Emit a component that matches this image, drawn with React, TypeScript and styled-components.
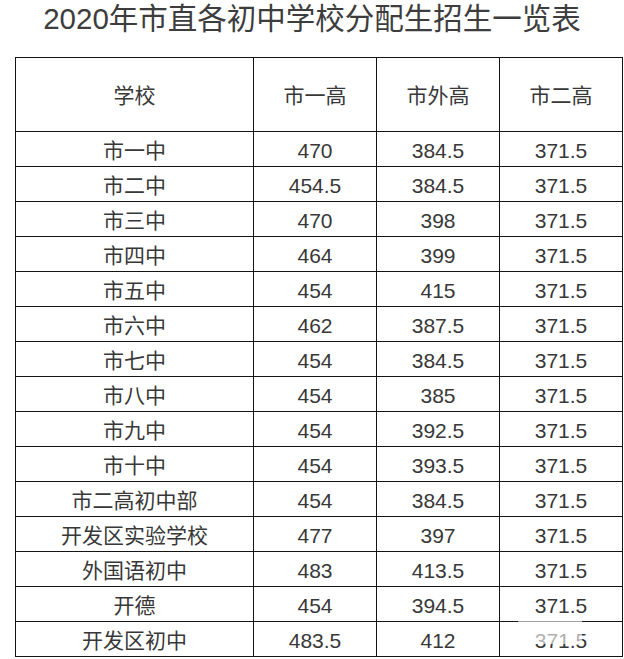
import React from "react";
import styled, { createGlobalStyle } from "styled-components";

const GlobalStyle = createGlobalStyle`
  html, body {
    margin: 0;
    padding: 0;
    background: #ffffff;
  }
  body {
    font-family: "Liberation Sans", "Noto Sans CJK SC", sans-serif;
    color: #333333;
  }
`;

const Page = styled.div`
  position: relative;
  width: 624px;
  height: 659px;
  overflow: hidden;
  background: #ffffff;
`;

const Title = styled.h1`
  margin: 0;
  height: 57px;
  padding-top: 2px;
  box-sizing: border-box;
  text-align: center;
  font-size: 29.5px;
  font-weight: 400;
  line-height: 34px;
  color: #3d3d3d;
`;

const Grid = styled.div`
  margin-left: 15px;
  width: 608px;
  box-sizing: border-box;
  display: grid;
  grid-template-columns: 237px 122px 122px 122px;
  grid-template-rows: 73px;
  grid-auto-rows: 34px;
  gap: 1px;
  padding: 1px;
  background: #141414;
`;

const Cell = styled.div<{ $head?: boolean }>`
  background: #ffffff;
  display: flex;
  align-items: center;
  justify-content: center;
  font-size: 21px;
  line-height: 1;
  color: #383838;
  padding-top: ${(p) => (p.$head ? "2px" : "3px")};
  box-sizing: border-box;
  white-space: nowrap;
`;

/* faint watermark patch over the bottom-right corner */
const Watermark = styled.div`
  position: absolute;
  left: 518px;
  top: 618px;
  width: 64px;
  height: 26px;
  background: rgba(255, 255, 255, 0.6);
  pointer-events: none;
`;

const headers = ["学校", "市一高", "市外高", "市二高"];

const rows: [string, string, string, string][] = [
  ["市一中", "470", "384.5", "371.5"],
  ["市二中", "454.5", "384.5", "371.5"],
  ["市三中", "470", "398", "371.5"],
  ["市四中", "464", "399", "371.5"],
  ["市五中", "454", "415", "371.5"],
  ["市六中", "462", "387.5", "371.5"],
  ["市七中", "454", "384.5", "371.5"],
  ["市八中", "454", "385", "371.5"],
  ["市九中", "454", "392.5", "371.5"],
  ["市十中", "454", "393.5", "371.5"],
  ["市二高初中部", "454", "384.5", "371.5"],
  ["开发区实验学校", "477", "397", "371.5"],
  ["外国语初中", "483", "413.5", "371.5"],
  ["开德", "454", "394.5", "371.5"],
  ["开发区初中", "483.5", "412", "371.5"],
];

export default function App() {
  return (
    <Page>
      <GlobalStyle />
      <Title>2020年市直各初中学校分配生招生一览表</Title>
      <Grid>
        {headers.map((h) => (
          <Cell key={h} $head>
            {h}
          </Cell>
        ))}
        {rows.map((r) =>
          r.map((v, i) => <Cell key={r[0] + i}>{v}</Cell>)
        )}
      </Grid>
      <Watermark />
    </Page>
  );
}
